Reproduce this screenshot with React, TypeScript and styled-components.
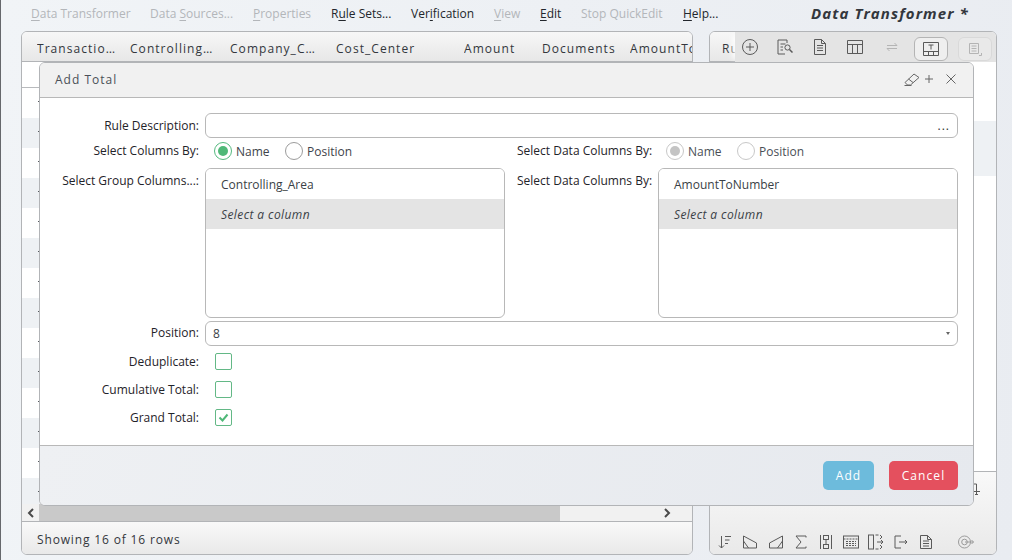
import React from "react";
import styled, { createGlobalStyle } from "styled-components";

const Global = createGlobalStyle`
  html, body { margin: 0; padding: 0; height: 100%; }
  body { font-family: "Open Sans", "Liberation Sans", sans-serif; font-size: 12px; color: #2b2f36; overflow: hidden; }
  #root { height: 100%; }
`;

const Page = styled.div`
  position: relative;
  width: 1012px;
  height: 560px;
  box-sizing: border-box;
  overflow: hidden;
  background: linear-gradient(100deg, #f1f4f7, #e9ecf1);
  border-left: 1px solid #66686c;
  padding-left: 20px;
  display: flex;
  flex-direction: column;
`;
const MenuBar = styled.div`
  height: 31px;
  display: flex;
  align-items: flex-start;
  padding: 5px 0 0 10px;
  box-sizing: border-box;
`;
const MenuItem = styled.span<{ $off?: boolean; $w: number }>`
  width: ${(p) => p.$w}px;
  flex: none;
  line-height: 18px;
  font-size: 12px;
  white-space: nowrap;
  color: ${(p) => (p.$off ? "#b3b6ba" : "#22262c")};
  u { text-underline-offset: 2px; }
`;
const Title = styled.span`
  margin: -1px 0 0 30px;
  font-size: 15px;
  line-height: 18px;
  font-weight: 700;
  font-style: italic;
  letter-spacing: 1.08px;
  color: #33373d;
  white-space: nowrap;
`;
const Panels = styled.div`
  display: flex;
  gap: 16px;
  height: 524px;
`;
const Panel = styled.section<{ $w: number }>`
  position: relative;
  width: ${(p) => p.$w}px;
  box-sizing: border-box;
  border: 1px solid #b2b4b7;
  border-radius: 6px;
  overflow: hidden;
  background: #fff;
  display: flex;
  flex-direction: column;
`;
const Head = styled.div`
  height: 30px;
  flex: none;
  display: flex;
  align-items: center;
  box-sizing: border-box;
  padding: 4px 0 0 15px;
  border-bottom: 1px solid #b2b4b7;
  background: linear-gradient(#f7f7f7, #e7e7e7);
  letter-spacing: 1.05px;
  white-space: nowrap;
  line-height: 16px;
  color: #33373d;
`;
const HeadCell = styled.span<{ $w: number }>`
  width: ${(p) => p.$w}px;
  flex: none;
  overflow: hidden;
`;
const SubRow = styled.div`
  height: 25px;
  flex: none;
  border-bottom: 1px solid #b8babd;
`;
const Rows = styled.div`
  flex: 1;
  overflow: hidden;
`;
const Row = styled.div<{ $alt: boolean }>`
  height: 30px;
  background: ${(p) => (p.$alt ? "#eef1f4" : "#fff")};
  &::before {
    content: "";
    display: block;
    width: 1px;
    height: 1px;
    margin-left: 16px;
    position: relative;
    top: 13px;
    background: #55585c;
  }
`;
const ScrollBar = styled.div`
  height: 17px;
  flex: none;
  display: flex;
  align-items: center;
  background: #f1f1f1;
`;
const ScrollBtn = styled.div`
  width: 17px;
  height: 17px;
  flex: none;
  display: flex;
  align-items: center;
  justify-content: center;
  color: #4a4a4a;
`;
const Track = styled.div`
  flex: 1;
  height: 17px;
`;
const Thumb = styled.div`
  width: 521px;
  height: 17px;
  background: #c9c9c9;
`;
const Status = styled.div`
  height: 33px;
  flex: none;
  box-sizing: border-box;
  border-top: 1px solid #b2b4b7;
  padding: 2px 0 0 15px;
  display: flex;
  align-items: center;
  letter-spacing: 0.85px;
  background: linear-gradient(#f9f9f9, #e9e9e9);
  color: #33373d;
`;
const RHead = styled(Head)`
  padding-left: 12px;
`;
const TopTools = styled.div`
  position: absolute;
  left: 25px;
  top: 0;
  right: 0;
  height: 30px;
  background: #e4e4e4;
  box-shadow: -6px 0 5px -3px rgba(255,255,255,.8);
  color: #5c5c5c;
`;
const ToolSlot = styled.span<{ $x: number; $boxed?: boolean; $dim?: boolean }>`
  position: absolute;
  left: ${(p) => p.$x}px;
  top: ${(p) => (p.$boxed ? 5 : 4)}px;
  width: ${(p) => (p.$boxed ? 34 : 22)}px;
  height: ${(p) => (p.$boxed ? 24 : 22)}px;
  box-sizing: border-box;
  display: flex;
  align-items: center;
  justify-content: center;
  border-radius: 6px;
  color: ${(p) => (p.$dim ? "#b4b4b4" : "#5a5a5a")};
  border: ${(p) => (p.$boxed ? `1px solid ${p.$dim ? "#d9d9d9" : "#b4b4b4"}` : "none")};
  background: ${(p) => (p.$boxed ? (p.$dim ? "#e9e9e9" : "#efefef") : "transparent")};
`;
const RBody = styled.div`
  flex: 1;
  padding-top: 59px;
  background: #fff;
`;
const RBand = styled.div`
  height: 55px;
  background: #eef1f4;
`;
const BottomTools = styled.div`
  position: relative;
  height: 83px;
  flex: none;
  box-sizing: border-box;
  border-top: 1px solid #b2b4b7;
  background: linear-gradient(#f9f9f9, #e9e9e9);
  display: flex;
  align-items: flex-end;
  padding: 0 0 1px 2px;
  color: #5a5a5a;
`;
const BottomIcon = styled.span<{ $w: number; $dim?: boolean }>`
  width: ${(p) => p.$w}px;
  height: 22px;
  flex: none;
  display: flex;
  align-items: center;
  justify-content: center;
  color: ${(p) => (p.$dim ? "#9a9a9a" : "inherit")};
`;
const CornerIcon = styled.span`
  position: absolute;
  top: 10px;
  right: 15px;
  color: #5a5a5a;
`;

const Dialog = styled.div`
  position: absolute;
  left: 38px;
  top: 62px;
  width: 935px;
  height: 444px;
  box-sizing: border-box;
  border: 1px solid #b2b4b7;
  border-radius: 6px;
  overflow: hidden;
  background: #fff;
  display: flex;
  flex-direction: column;
`;
const DialogHead = styled.div`
  height: 35px;
  flex: none;
  box-sizing: border-box;
  border-bottom: 1px solid #b8b8b8;
  background: #f1f1f1;
  display: flex;
  align-items: center;
  padding: 0 17px 2px 15px;
  color: #4a5058;
  letter-spacing: 1px;
`;
const DialogTitle = styled.span`
  flex: 1;
`;
const HeadIcons = styled.div`
  display: flex;
  align-items: center;
  gap: 5px;
  color: #666;
`;
const CloseIcon = styled.span`
  display: flex;
  margin-left: 8px;
`;
const Form = styled.div`
  flex: 1;
  padding: 15px 15px 0 0;
  display: flex;
  flex-direction: column;
`;
const FormRow = styled.div<{ $h: number }>`
  height: ${(p) => p.$h}px;
  display: flex;
  align-items: flex-start;
  flex: none;
`;
const Label = styled.label<{ $left?: boolean; $w?: number; $top?: number }>`
  width: ${(p) => p.$w ?? 159}px;
  flex: none;
  text-align: ${(p) => (p.$left ? "left" : "right")};
  line-height: 16px;
  font-size: 12px;
  font-weight: 500;
  color: #1f2329;
  margin: ${(p) => p.$top ?? 0}px 6px 0 0;
  white-space: nowrap;
`;
const TextField = styled.div`
  flex: 1;
  height: 25px;
  box-sizing: border-box;
  border: 1px solid #b8b8b8;
  border-radius: 6px;
  display: flex;
  align-items: center;
  justify-content: flex-end;
  padding: 0 7px;
  color: #333;
  letter-spacing: 1px;
  font-size: 12px;
`;
const SelectField = styled(TextField)`
  justify-content: space-between;
  letter-spacing: 0;
  color: #3a3f46;
`;
const Caret = styled.span`
  width: 0;
  height: 0;
  border-left: 2.5px solid transparent;
  border-right: 2.5px solid transparent;
  border-top: 3px solid #666;
`;
const RadioGroup = styled.div<{ $w: number; $pad: number }>`
  width: ${(p) => p.$w}px;
  flex: none;
  display: flex;
  align-items: center;
  height: 20px;
  padding-left: ${(p) => p.$pad}px;
  box-sizing: border-box;
`;
const RadioMark = styled.span<{ $on?: boolean; $dim?: boolean }>`
  width: 18px;
  height: 18px;
  box-sizing: border-box;
  border-radius: 50%;
  flex: none;
  border: 1px solid ${(p) => (p.$dim ? "#c8c8c8" : p.$on ? "#55b97f" : "#9c9c9c")};
  display: flex;
  align-items: center;
  justify-content: center;
  &::after {
    content: "";
    width: 10px;
    height: 10px;
    border-radius: 50%;
    background: ${(p) => (!p.$on ? "transparent" : p.$dim ? "#c4c4c4" : "#4fb878")};
  }
`;
const RadioText = styled.span<{ $w: number; $dim?: boolean }>`
  width: ${(p) => p.$w}px;
  padding-left: 4px;
  box-sizing: border-box;
  flex: none;
  color: ${(p) => (p.$dim ? "#4a4f56" : "#3e434a")};
`;
const ListBox = styled.div`
  width: 300px;
  height: 150px;
  flex: none;
  box-sizing: border-box;
  border: 1px solid #b8b8b8;
  border-radius: 6px;
  overflow: hidden;
`;
const ListItem = styled.div<{ $ph?: boolean }>`
  height: 30px;
  display: flex;
  align-items: center;
  padding-left: 15px;
  background: ${(p) => (p.$ph ? "#e4e4e4" : "#fff")};
  font-style: ${(p) => (p.$ph ? "italic" : "normal")};
  letter-spacing: ${(p) => (p.$ph ? "0.4px" : "0")};
  color: #3a3f46;
`;
const Gap = styled.div`
  width: 12px;
  flex: none;
`;
const CheckRow = styled.div`
  height: 28px;
  flex: none;
  display: flex;
  align-items: flex-start;
`;
const CheckBox = styled.span`
  width: 17px;
  height: 17px;
  margin-left: 10px;
  flex: none;
  box-sizing: border-box;
  border: 1px solid #63b886;
  border-radius: 2px;
  display: flex;
  align-items: center;
  justify-content: center;
  color: #4fb878;
`;
const Footer = styled.div`
  height: 60px;
  flex: none;
  box-sizing: border-box;
  border-top: 1px solid #b8b8b8;
  background: linear-gradient(110deg, #eef0f3, #e6e9ee);
  display: flex;
  justify-content: flex-end;
  align-items: flex-start;
  padding: 15px 15px 0 0;
  gap: 15px;
`;
const Button = styled.button<{ $bg: string; $w: number }>`
  width: ${(p) => p.$w}px;
  height: 29px;
  border: none;
  border-radius: 5px;
  background: ${(p) => p.$bg};
  color: #fff;
  font: 12px "Open Sans", sans-serif;
  letter-spacing: 1.1px;
  padding: 0;
`;

const S: React.FC<{ w?: number; h?: number; sw?: number; children: React.ReactNode }> = ({ w = 18, h = 18, sw = 1, children }) => (
  <svg width={w} height={h} viewBox={`0 0 ${w} ${h}`} fill="none" stroke="currentColor" strokeWidth={sw}>{children}</svg>
);

const topTools: { x: number; boxed?: boolean; dim?: boolean; icon: React.ReactNode }[] = [
  { x: 4, icon: <S w={16} h={16}><circle cx="8" cy="8" r="7.5" /><path d="M8 4v8M4 8h8" /></S> },
  { x: 39, icon: <S w={16} h={16}><path d="M10 1H1v14h7M10 1v3" /><path d="M3.5 5h5M3.5 8h2.5M3.5 11h2.5" /><circle cx="10.5" cy="8.5" r="2.6" /><path d="M12.5 10.5l3 3" strokeWidth="1.5" /></S> },
  { x: 74, icon: <S w={12} h={16}><path d="M.5 .5h7l4 4v11H.5zM7.5 .5v4h4M3 6.5h6M3 9h6M3 11.5h6" /></S> },
  { x: 109, icon: <S w={16} h={14}><path d="M.5 .5h15v13H.5zM.5 4.5h15M5.5 4.5v9M10.5 4.5v9" /></S> },
  { x: 146, dim: true, icon: <S w={12} h={10}><path d="M1 3.5h10M11 3.5L8.5 1M11 6.5H1M1 6.5L3.5 9" /></S> },
  { x: 179, boxed: true, icon: <S w={16} h={14}><path d="M.5 .5h15v13H.5zM.5 9.5h15M5.5 9.5v4M10.5 9.5v4M5.5 3h5M8 3v4.5" /></S> },
  { x: 223, boxed: true, dim: true, icon: <S w={14} h={14}><path d="M1.5 1.5h9v10h-9zM3.5 4h5M3.5 6.5h5M3.5 9h5" /><path d="M11 13.5h2.5V11" /></S> },
];

const bottomIcons: { w: number; dim?: boolean; icon: React.ReactNode }[] = [
  { w: 25, icon: <S w={14} h={14}><path d="M3.5 1v12M1 10.5L3.5 13 6 10.5M7 1.5h6M7 5h4.5M7 8.5h3" /></S> },
  { w: 26, icon: <S w={14} h={14}><path d="M.5 1l13 7v5H.5zM.5 6l5 7" /></S> },
  { w: 25, icon: <S w={14} h={14}><path d="M13.5 1L.5 8v5h13zM13.5 6l-5 7" /></S> },
  { w: 25, icon: <S w={12} h={14}><path d="M11 2.5V1H1l5 6-5 6h10v-1.5" /></S> },
  { w: 25, icon: <S w={12} h={16}><path d="M.5 1v14M11.5 1v14" /><rect x="3.5" y="1.5" width="5" height="4" /><rect x="3.5" y="10.5" width="5" height="4" /><path d="M6 6v4" /></S> },
  { w: 25, icon: <S w={16} h={14}><rect x=".5" y="1" width="15" height="12" /><path d="M.5 4h15M3 6.5h10M3 8.5h10M3 10.5h10" strokeDasharray="2 1" /></S> },
  { w: 26, icon: <S w={16} h={16}><rect x=".5" y="1" width="5" height="14" /><path d="M7.5 1h3M7.5 15h3M9 8h6M13 6l2 2-2 2M12 1l2 2-2 2M12 15l2-2-2-2" /></S> },
  { w: 24, icon: <S w={14} h={14}><path d="M7 1H1v12h6M5 7h8M11 5l2 2-2 2" /></S> },
  { w: 26, icon: <S w={12} h={14}><path d="M.5.5h7l4 4v9H.5zM7.5.5v4h4M3 6h6M3 8.5h6M3 11h6" /></S> },
  { w: 54, dim: true, icon: <S w={16} h={14}><circle cx="6.5" cy="7" r="6" /><circle cx="6.5" cy="7" r="2.8" /><path d="M7 7h8.5M13.5 5l2 2-2 2" /></S> },
];

const columns: [string, number][] = [
  ["Transactio…", 93], ["Controlling…", 100], ["Company_C…", 106], ["Cost_Center", 128],
  ["Amount", 78], ["Documents", 88], ["AmountTo", 63],
];

export default function App() {
  return (
    <>
      <Global />
      <Page>
        <MenuBar>
          <MenuItem $off $w={119}><u>D</u>ata Transformer</MenuItem>
          <MenuItem $off $w={103}>Data <u>S</u>ources...</MenuItem>
          <MenuItem $off $w={78}><u>P</u>roperties</MenuItem>
          <MenuItem $w={80}>R<u>u</u>le Sets...</MenuItem>
          <MenuItem $w={83}>Ver<u>i</u>fication</MenuItem>
          <MenuItem $off $w={46}><u>V</u>iew</MenuItem>
          <MenuItem $w={41}><u>E</u>dit</MenuItem>
          <MenuItem $off $w={102}>Stop QuickEdit</MenuItem>
          <MenuItem $w={98}><u>H</u>elp...</MenuItem>
          <Title>Data Transformer *</Title>
        </MenuBar>
        <Panels>
          <Panel $w={672}>
            <Head>
              {columns.map(([t, w]) => <HeadCell key={t} $w={w}>{t}</HeadCell>)}
            </Head>
            <SubRow />
            <Rows>
              {Array.from({ length: 14 }, (_, i) => <Row key={i} $alt={i % 2 === 1} />)}
            </Rows>
            <ScrollBar>
              <ScrollBtn>
                <svg width="8" height="10" viewBox="0 0 8 10" fill="none" stroke="currentColor" strokeWidth="2"><path d="M6 1L2 5l4 4" /></svg>
              </ScrollBtn>
              <Track><Thumb /></Track>
              <ScrollBtn>
                <svg width="8" height="10" viewBox="0 0 8 10" fill="none" stroke="currentColor" strokeWidth="2"><path d="M2 1l4 4-4 4" /></svg>
              </ScrollBtn>
              <ScrollBtn />
            </ScrollBar>
            <Status>Showing 16 of 16 rows</Status>
          </Panel>
          <Panel $w={288}>
            <RHead><HeadCell $w={13}>Ru</HeadCell></RHead>
            <TopTools>
              {topTools.map((t) => <ToolSlot key={t.x} $x={t.x} $boxed={t.boxed} $dim={t.dim}>{t.icon}</ToolSlot>)}
            </TopTools>
            <RBody><RBand /></RBody>
            <BottomTools>
              <CornerIcon><S w={14} h={12}><path d="M0 1h9.5v7M6 8.5h7M9.5 8.5v3M8 11.5h3" /></S></CornerIcon>
              {bottomIcons.map((b, i) => <BottomIcon key={i} $w={b.w} $dim={b.dim}>{b.icon}</BottomIcon>)}
            </BottomTools>
          </Panel>
        </Panels>
        <Dialog>
          <DialogHead>
            <DialogTitle>Add Total</DialogTitle>
            <HeadIcons>
              <S w={16} h={14}><path d="M.5 13.5h7M3.5 13L1 10.5 10 2l5 3.5-8.5 7.5zM4.5 7l4.5 3.5" /></S>
              <S w={8} h={8}><path d="M4 0v8M0 4h8" /></S>
              <CloseIcon><S w={10} h={10}><path d="M.5.5l9 9M9.5.5l-9 9" /></S></CloseIcon>
            </HeadIcons>
          </DialogHead>
          <Form>
            <FormRow $h={28}>
              <Label $top={5}>Rule Description:</Label>
              <TextField>...</TextField>
            </FormRow>
            <FormRow $h={27}>
              <Label $top={2}>Select Columns By:</Label>
              <RadioGroup $w={312} $pad={9}>
                <RadioMark $on /><RadioText $w={53}>Name</RadioText>
                <RadioMark /><RadioText $w={80}>Position</RadioText>
              </RadioGroup>
              <Label $left $w={135} $top={2}>Select Data Columns By:</Label>
              <RadioGroup $w={300} $pad={8}>
                <RadioMark $on $dim /><RadioText $w={53} $dim>Name</RadioText>
                <RadioMark $dim /><RadioText $w={80} $dim>Position</RadioText>
              </RadioGroup>
            </FormRow>
            <FormRow $h={153}>
              <Label $top={5}>Select Group Columns...:</Label>
              <ListBox>
                <ListItem>Controlling_Area</ListItem>
                <ListItem $ph>Select a column</ListItem>
              </ListBox>
              <Gap />
              <Label $left $w={135} $top={5}>Select Data Columns By:</Label>
              <ListBox>
                <ListItem>AmountToNumber</ListItem>
                <ListItem $ph>Select a column</ListItem>
              </ListBox>
            </FormRow>
            <FormRow $h={32}>
              <Label $top={4}>Position:</Label>
              <SelectField>8<Caret /></SelectField>
            </FormRow>
            <CheckRow><Label $top={1}>Deduplicate:</Label><CheckBox /></CheckRow>
            <CheckRow><Label $top={1}>Cumulative Total:</Label><CheckBox /></CheckRow>
            <CheckRow>
              <Label $top={1}>Grand Total:</Label>
              <CheckBox>
                <svg width="11" height="9" viewBox="0 0 11 9" fill="none" stroke="currentColor" strokeWidth="2"><path d="M1.5 4.5l3 3 5-6" /></svg>
              </CheckBox>
            </CheckRow>
          </Form>
          <Footer>
            <Button $bg="#6dbbdc" $w={51}>Add</Button>
            <Button $bg="#e4505e" $w={69}>Cancel</Button>
          </Footer>
        </Dialog>
      </Page>
    </>
  );
}
